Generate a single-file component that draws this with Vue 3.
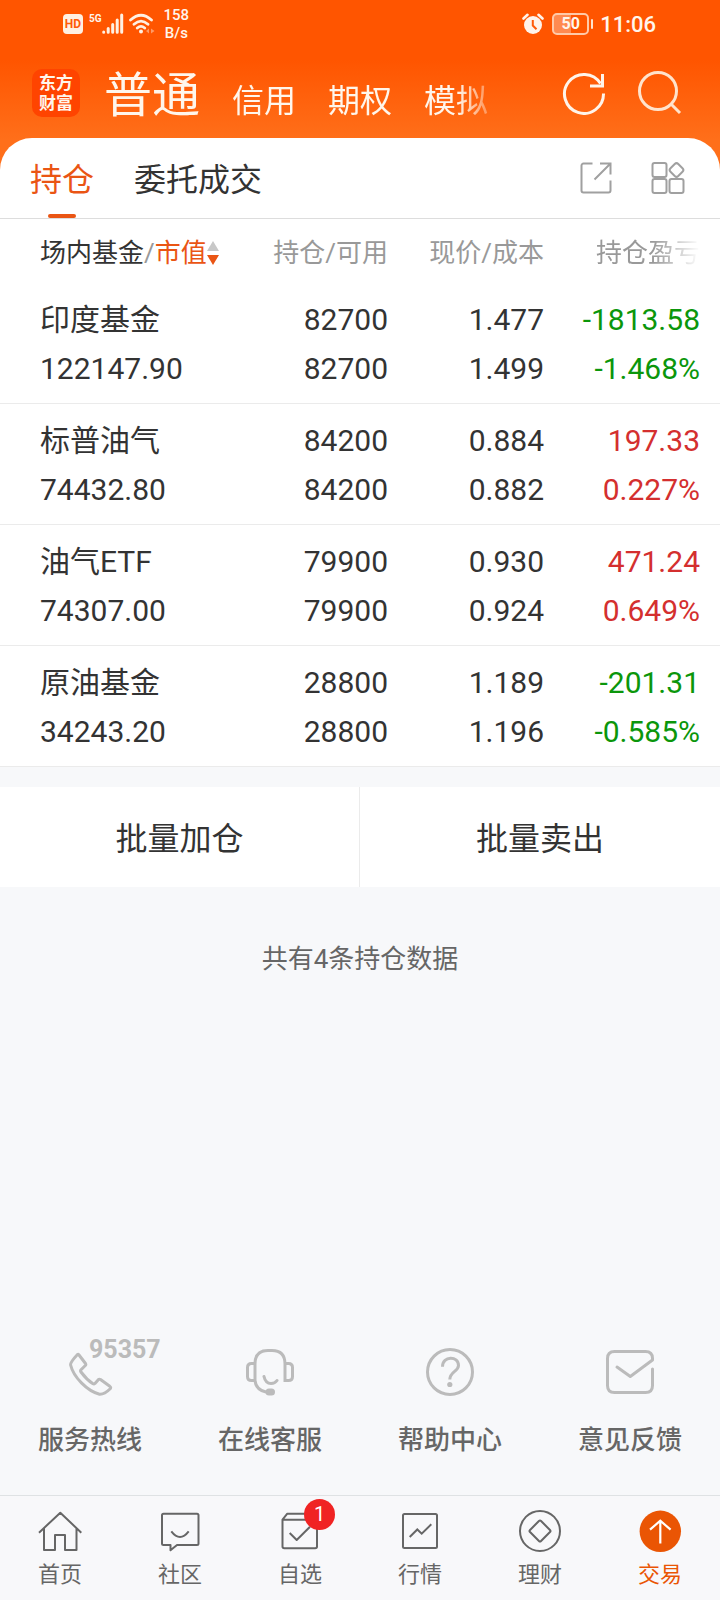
<script setup>
import { ref } from 'vue'

const accounts = ['普通', '信用', '期权', '模拟']
const account = ref('普通')

const tabs = ['持仓', '委托成交']
const tab = ref('持仓')

const holdings = [
  { name: '印度基金', value: '122147.90', held: '82700', free: '82700', price: '1.477', cost: '1.499', profit: '-1813.58', rate: '-1.468%' },
  { name: '标普油气', value: '74432.80', held: '84200', free: '84200', price: '0.884', cost: '0.882', profit: '197.33', rate: '0.227%' },
  { name: '油气ETF', value: '74307.00', held: '79900', free: '79900', price: '0.930', cost: '0.924', profit: '471.24', rate: '0.649%' },
  { name: '原油基金', value: '34243.20', held: '28800', free: '28800', price: '1.189', cost: '1.196', profit: '-201.31', rate: '-0.585%' },
]
</script>

<template>
  <div class="app">
    <header class="top">
      <div class="status">
        <div class="status-side">
          <span class="hd">HD</span>
          <span class="net">5G</span>
          <svg class="signal" width="22" height="22" viewBox="0 0 22 22" fill="none" stroke="#fff0e2" stroke-width="3" stroke-linecap="round">
            <path d="M1.7 19v.3M6.2 15.500v3.800M10.700 11.500v7.800M15.200 7v12.300M19.700 2v17.300" />
          </svg>
          <svg class="wifi" width="27" height="22" viewBox="0 0 27 22" fill="none" stroke="#fff0e2" stroke-width="2.800" stroke-linecap="round">
            <path d="M1.500 7Q12 -2.500 22.500 7M5 11.300Q12 5 19 11.300M8.300 15Q12 11.800 15.700 15" />
            <circle cx="12" cy="18.500" r="2" fill="#fff0e2" stroke="none" />
            <path d="M20 15.500v5l-3-2.500zM22 15.500v5l3.500-2.500z" fill="#ff9a66" stroke="none" />
          </svg>
          <span class="speed">158<br>B/s</span>
        </div>
        <div class="status-side">
          <svg width="22" height="22" viewBox="0 0 22 22" fill="none">
            <circle cx="11" cy="12" r="9" fill="#fff3ea" />
            <path d="M1.500 5.500L5.500 1.800M20.500 5.500L16.500 1.800" stroke="#fff3ea" stroke-width="2.600" stroke-linecap="round" />
            <path d="M10.800 7v5.500l3.700 3.700" stroke="#ff5a08" stroke-width="2" />
          </svg>
          <span class="battery">50</span>
          <span class="time">11:06</span>
        </div>
      </div>
      <div class="bar">
        <div class="logo">东方<br>财富</div>
        <nav class="accounts">
          <button v-for="a in accounts" :key="a" type="button" :class="{ on: a === account }" @click="account = a">{{ a }}</button>
        </nav>
        <div class="tools">
          <button type="button" aria-label="刷新">
            <svg width="44" height="44" viewBox="0 0 44 44" fill="none" stroke="#fff4ea" stroke-width="3">
              <path d="M41.500 22.500A19.500 19.500 0 1 1 38.500 12.500M40.500 3v12H28" />
            </svg>
          </button>
          <button type="button" aria-label="搜索">
            <svg width="44" height="44" viewBox="0 0 44 44" fill="none" stroke="#ffe3cc" stroke-width="3">
              <circle cx="20" cy="20" r="18.500" />
              <path d="M33 33l9 9" />
            </svg>
          </button>
        </div>
      </div>
    </header>

    <main class="sheet">
      <div class="tabs">
        <button v-for="t in tabs" :key="t" type="button" class="tab" :class="{ on: t === tab }" @click="tab = t">{{ t }}</button>
        <div class="tab-tools">
          <button type="button" aria-label="分享">
            <svg width="32" height="32" viewBox="0 0 32 32" fill="none" stroke="#a0a0a0" stroke-width="2">
              <path d="M12.500 1.500H3.500a2 2 0 0 0-2 2V28.500a2 2 0 0 0 2 2H28.500a2 2 0 0 0 2-2V18.500M20 1.500H30.500V12.500M30 2L14.500 17.500" />
            </svg>
          </button>
          <button type="button" aria-label="更多功能">
            <svg width="34" height="34" viewBox="0 0 34 34" fill="none" stroke="#a0a0a0" stroke-width="2">
              <rect x="1.500" y="2" width="14" height="14" rx="2" />
              <rect x="1.500" y="18" width="14" height="14" rx="2" />
              <rect x="18.500" y="18" width="14" height="14" rx="2" />
              <rect x="20" y="3.500" width="11" height="11" rx="2.500" transform="rotate(45 25.500 9)" />
            </svg>
          </button>
        </div>
      </div>

      <table class="holdings">
        <thead>
          <tr>
            <th scope="col">
              <button type="button" class="sort">
                <span class="dark">场内基金</span>/<span class="hot">市值</span>
                <svg width="12" height="24" viewBox="0 0 12 24">
                  <path d="M6 0L12 10H0z" fill="#c8c8c8" />
                  <path d="M6 24L12 14H0z" fill="#ea5514" />
                </svg>
              </button>
            </th>
            <th scope="col">持仓/可用</th>
            <th scope="col">现价/成本</th>
            <th scope="col"><span class="fade">持仓盈亏</span></th>
          </tr>
        </thead>
        <tbody>
          <tr v-for="h in holdings" :key="h.name">
            <td><div>{{ h.name }}</div><div>{{ h.value }}</div></td>
            <td><div>{{ h.held }}</div><div>{{ h.free }}</div></td>
            <td><div>{{ h.price }}</div><div>{{ h.cost }}</div></td>
            <td :class="h.profit.startsWith('-') ? 'down' : 'up'"><div>{{ h.profit }}</div><div>{{ h.rate }}</div></td>
          </tr>
        </tbody>
      </table>
    </main>

    <div class="batch">
      <button type="button">批量加仓</button>
      <button type="button">批量卖出</button>
    </div>
    <p class="count">共有4条持仓数据</p>

    <section class="services">
      <a href="#hotline">
        <span class="pic">
          <svg width="48" height="48" viewBox="0 0 48 48" fill="none" stroke="#bbb" stroke-width="3" stroke-linejoin="round">
            <path d="M11.500 6.500Q12.300 6 13 7L19.500 15.500Q20.200 16.500 19.300 17.500L14.800 22Q14.200 23 15 24Q20.500 31.500 27 35.800Q28 36.400 29 35.500L32.300 31.700Q33.300 30.800 34.500 31.500L43.800 38.300Q45.300 39.500 44.200 40.800Q38.500 46.500 33.500 46.200C21 43 7.500 29 4.600 17Q4 14.500 11.500 6.500z" />
          </svg>
          <span class="number">95357</span>
        </span>
        服务热线
      </a>
      <a href="#chat">
        <span class="pic">
          <svg width="48" height="48" viewBox="0 0 48 48" fill="none" stroke="#bbb" stroke-width="3" stroke-linecap="round">
            <path d="M9 32V16Q9 2.500 22 2.500H26Q39 2.500 39 16V32.500H42.500Q46.500 32.500 46.500 28.500V19.500Q46.500 15.500 42.500 15.500H39M9 15.500H5.500Q1.500 15.500 1.500 19.500V28.500Q1.500 32.500 5.500 32.500H9Q10 42 20 44M18 28.500Q19.500 35.500 25 35.500Q29 35.500 31 32.500" />
            <rect x="19.500" y="40.500" width="9.500" height="7" rx="3.500" fill="#bbb" stroke="none" />
          </svg>
        </span>
        在线客服
      </a>
      <a href="#help">
        <span class="pic">
          <svg width="48" height="48" viewBox="0 0 48 48" fill="none" stroke="#bbb" stroke-width="3">
            <circle cx="24" cy="24" r="22.500" />
            <path d="M16.500 18.700C16.500 7.500 32.500 7.500 32.500 17.500C32.500 23.500 23.800 23.500 23.800 31.500" />
            <circle cx="23.800" cy="36.500" r="2.600" fill="#bbb" stroke="none" />
          </svg>
        </span>
        帮助中心
      </a>
      <a href="#feedback">
        <span class="pic">
          <svg width="48" height="48" viewBox="0 0 48 48" fill="none" stroke="#bbb" stroke-width="3" stroke-linejoin="round">
            <path d="M11 19L24.300 28.500L46.500 12V10.500Q46.500 3.500 39.500 3.500H8.500Q1.500 3.500 1.500 10.500V37.500Q1.500 44.500 8.500 44.500H39.500Q46.500 44.500 46.500 37.500V21" stroke-linecap="round" />
          </svg>
        </span>
        意见反馈
      </a>
    </section>

    <nav class="dock">
      <a href="#home">
        <span class="pic">
          <svg width="48" height="48" viewBox="0 0 48 48" fill="none" stroke="#666" stroke-width="2">
            <path d="M3 25.700L24.300 5.700L45.300 25.700M8 21.500V43H19V28H29V43H40.500V21.500" stroke-linejoin="round" />
          </svg>
        </span>
        首页
      </a>
      <a href="#community">
        <span class="pic">
          <svg width="48" height="48" viewBox="0 0 48 48" fill="none" stroke="#666" stroke-width="2" stroke-linejoin="round">
            <path d="M7.500 6.700H41Q42.500 6.700 42.500 8.200V36.500Q42.500 38 41 38H21L14.500 43.300V38H7.500Q6 38 6 36.500V8.200Q6 6.700 7.500 6.700zM15.300 24.300Q24 35.500 32.700 24.300" />
          </svg>
        </span>
        社区
      </a>
      <a href="#watchlist">
        <span class="pic">
          <svg width="48" height="48" viewBox="0 0 48 48" fill="none" stroke="#666" stroke-width="2" stroke-linejoin="round">
            <path d="M6.500 12.700H41V39.500Q41 41.300 39.200 41.300H8.300Q6.500 41.300 6.500 39.500V12.700L11.300 6.700H36.300L41 12.700M13.700 26L20.700 33L34 19.700" />
          </svg>
          <span class="badge">1</span>
        </span>
        自选
      </a>
      <a href="#market">
        <span class="pic">
          <svg width="48" height="48" viewBox="0 0 48 48" fill="none" stroke="#666" stroke-width="2">
            <rect x="7" y="7" width="34" height="34" rx="1.500" />
            <path d="M13.700 30L21.300 22.500L25.700 26.700L35.300 17.300" />
          </svg>
        </span>
        行情
      </a>
      <a href="#wealth">
        <span class="pic">
          <svg width="48" height="48" viewBox="0 0 48 48" fill="none" stroke="#666" stroke-width="2">
            <circle cx="24" cy="24" r="20" />
            <rect x="16.200" y="16.200" width="15.600" height="15.600" rx="1.500" transform="rotate(45 24 24)" />
          </svg>
        </span>
        理财
      </a>
      <a href="#trade" class="on">
        <span class="pic">
          <svg width="48" height="48" viewBox="0 0 48 48" fill="none" stroke="#fff" stroke-width="2.200">
            <circle cx="24.300" cy="24.300" r="20.700" fill="#ea5504" stroke="none" />
            <path d="M24.300 36.500V13.700M14 22.700L24.300 13.700L34.600 22.700" />
          </svg>
        </span>
        交易
      </a>
    </nav>
  </div>
</template>

<style>
body {
  margin: 0;
  background: #f7f8fa;
}
</style>

<style scoped>
.app {
  display: flex;
  flex-direction: column;
  min-height: 100vh;
  background: #f7f8fa;
  color: #333;
  font-family: Roboto, "Noto Sans CJK SC", sans-serif;
}
button {
  margin: 0;
  padding: 0;
  border: 0;
  background: none;
  color: inherit;
  font: inherit;
  white-space: nowrap;
  cursor: pointer;
}
a {
  color: inherit;
  text-decoration: none;
}
svg {
  display: block;
}

.top {
  padding-bottom: 32px;
  background: linear-gradient(#ff5500 60px, #ff6f1a 140px);
  color: #fff6ec;
}
.status {
  display: flex;
  justify-content: space-between;
  height: 48px;
  padding: 0 64px 0 63px;
}
.status-side {
  display: flex;
  align-items: center;
}
.hd {
  width: 20px;
  border-radius: 4px;
  background: #fff0e2;
  color: #ff5a08;
  font-size: 12px;
  font-weight: 700;
  line-height: 20px;
  text-align: center;
}
.net {
  align-self: flex-start;
  margin: 12px 0 0 6px;
  font-size: 10px;
  font-weight: 700;
  line-height: 13px;
}
.wifi {
  margin-left: 5px;
}
.speed {
  margin-left: 8px;
  font-size: 15px;
  font-weight: 500;
  line-height: 18px;
  text-align: center;
}
.battery {
  position: relative;
  box-sizing: border-box;
  width: 37px;
  margin: 0 11px 0 8px;
  border: 2px solid #ffc9a8;
  border-radius: 5px;
  background: linear-gradient(90deg, #ff8a50 50%, transparent 50%);
  font-size: 16px;
  font-weight: 700;
  line-height: 18px;
  text-align: center;
}
.battery::after {
  content: "";
  position: absolute;
  top: 4px;
  right: -6px;
  width: 2px;
  height: 10px;
  border-radius: 1px;
  background: #ffe3cc;
}
.time {
  font-size: 22px;
  font-weight: 500;
}

.bar {
  display: flex;
  align-items: center;
  height: 90px;
  padding: 0 38px 0 32px;
}
.logo {
  box-sizing: border-box;
  flex: none;
  width: 48px;
  height: 48px;
  padding-top: 4px;
  border-radius: 10px;
  background: #ff4400;
  font-size: 17px;
  font-weight: 700;
  line-height: 20px;
  text-align: center;
}
.accounts {
  display: flex;
  align-items: baseline;
  gap: 32px;
  margin-left: 24px;
  padding-top: 11px;
  font-size: 32px;
  line-height: 48px;
  mask-image: linear-gradient(90deg, #000 92%, transparent 104%);
}
.accounts .on {
  font-size: 48px;
}
.tools {
  display: flex;
  gap: 32px;
  margin-left: auto;
}

.sheet {
  margin-top: -32px;
  border-radius: 32px 32px 0 0;
  background: #fff;
}
.tabs {
  display: flex;
  gap: 40px;
  height: 80px;
  padding: 0 35px 0 30px;
  border-bottom: 1px solid #ddd;
  font-size: 32px;
}
.tab {
  position: relative;
  padding-bottom: 2px;
}
.tab.on {
  color: #ea5514;
}
.tab.on::after {
  content: "";
  position: absolute;
  bottom: 0;
  left: 50%;
  width: 28px;
  height: 4px;
  margin-left: -14px;
  border-radius: 2px;
  background: #ea5514;
}
.tab-tools {
  display: flex;
  align-items: center;
  gap: 39px;
  margin-left: auto;
}

.holdings {
  width: 100%;
  border-collapse: collapse;
  table-layout: fixed;
  font-size: 30px;
  line-height: 49px;
}
th,
td {
  box-sizing: border-box;
  padding: 0;
  text-align: right;
  white-space: nowrap;
}
th {
  height: 64px;
  padding-top: 4px;
  color: #999;
  font-size: 26px;
  font-weight: 400;
}
th:nth-child(2),
th:nth-child(3) {
  width: 156px;
}
th:nth-child(4) {
  width: 176px;
}
th:first-child,
td:first-child {
  padding-left: 40px;
  text-align: left;
}
th:last-child,
td:last-child {
  padding-right: 20px;
}
td {
  padding-top: 12px;
  padding-bottom: 10px;
  border-bottom: 1px solid #ebebeb;
}
.sort {
  display: flex;
  align-items: center;
}
.dark {
  color: #333;
}
.hot {
  color: #ea5514;
}
.fade {
  mask-image: linear-gradient(90deg, #000 55%, transparent);
}
.up {
  color: #d42f2f;
}
.down {
  color: #0b960b;
}

.batch {
  display: grid;
  grid-template-columns: 1fr 1fr;
  margin-top: 20px;
  background: #fff;
  font-size: 32px;
}
.batch button {
  height: 100px;
  padding-bottom: 2px;
}
.batch button:first-child {
  border-right: 1px solid #ebebeb;
}
.count {
  margin: 53px 0 auto;
  color: #666;
  font-size: 26px;
  line-height: 38px;
  text-align: center;
}

.services,
.dock {
  display: grid;
  grid-auto-flow: column;
  grid-auto-columns: 1fr;
}
.services a,
.dock a {
  display: flex;
  flex-direction: column;
  align-items: center;
  color: #666;
}
.services a {
  gap: 26px;
  padding-bottom: 36px;
  font-size: 26px;
  font-weight: 500;
  line-height: 37px;
}
.dock {
  border-top: 1px solid #dfe2e4;
  background: #f8f8fa;
}
.dock a {
  gap: 5px;
  padding: 11px 0;
  font-size: 22px;
  line-height: 29px;
}
.dock .on {
  color: #ea5504;
}
.pic {
  position: relative;
}
.number {
  position: absolute;
  top: -12px;
  left: 23px;
  color: #bbb;
  font-size: 25px;
  font-weight: 700;
  line-height: 28px;
}
.badge {
  position: absolute;
  top: -8px;
  left: 28px;
  width: 31px;
  border-radius: 16px;
  background: #f02323;
  color: #fff;
  font-size: 20px;
  line-height: 31px;
  text-align: center;
}
</style>
